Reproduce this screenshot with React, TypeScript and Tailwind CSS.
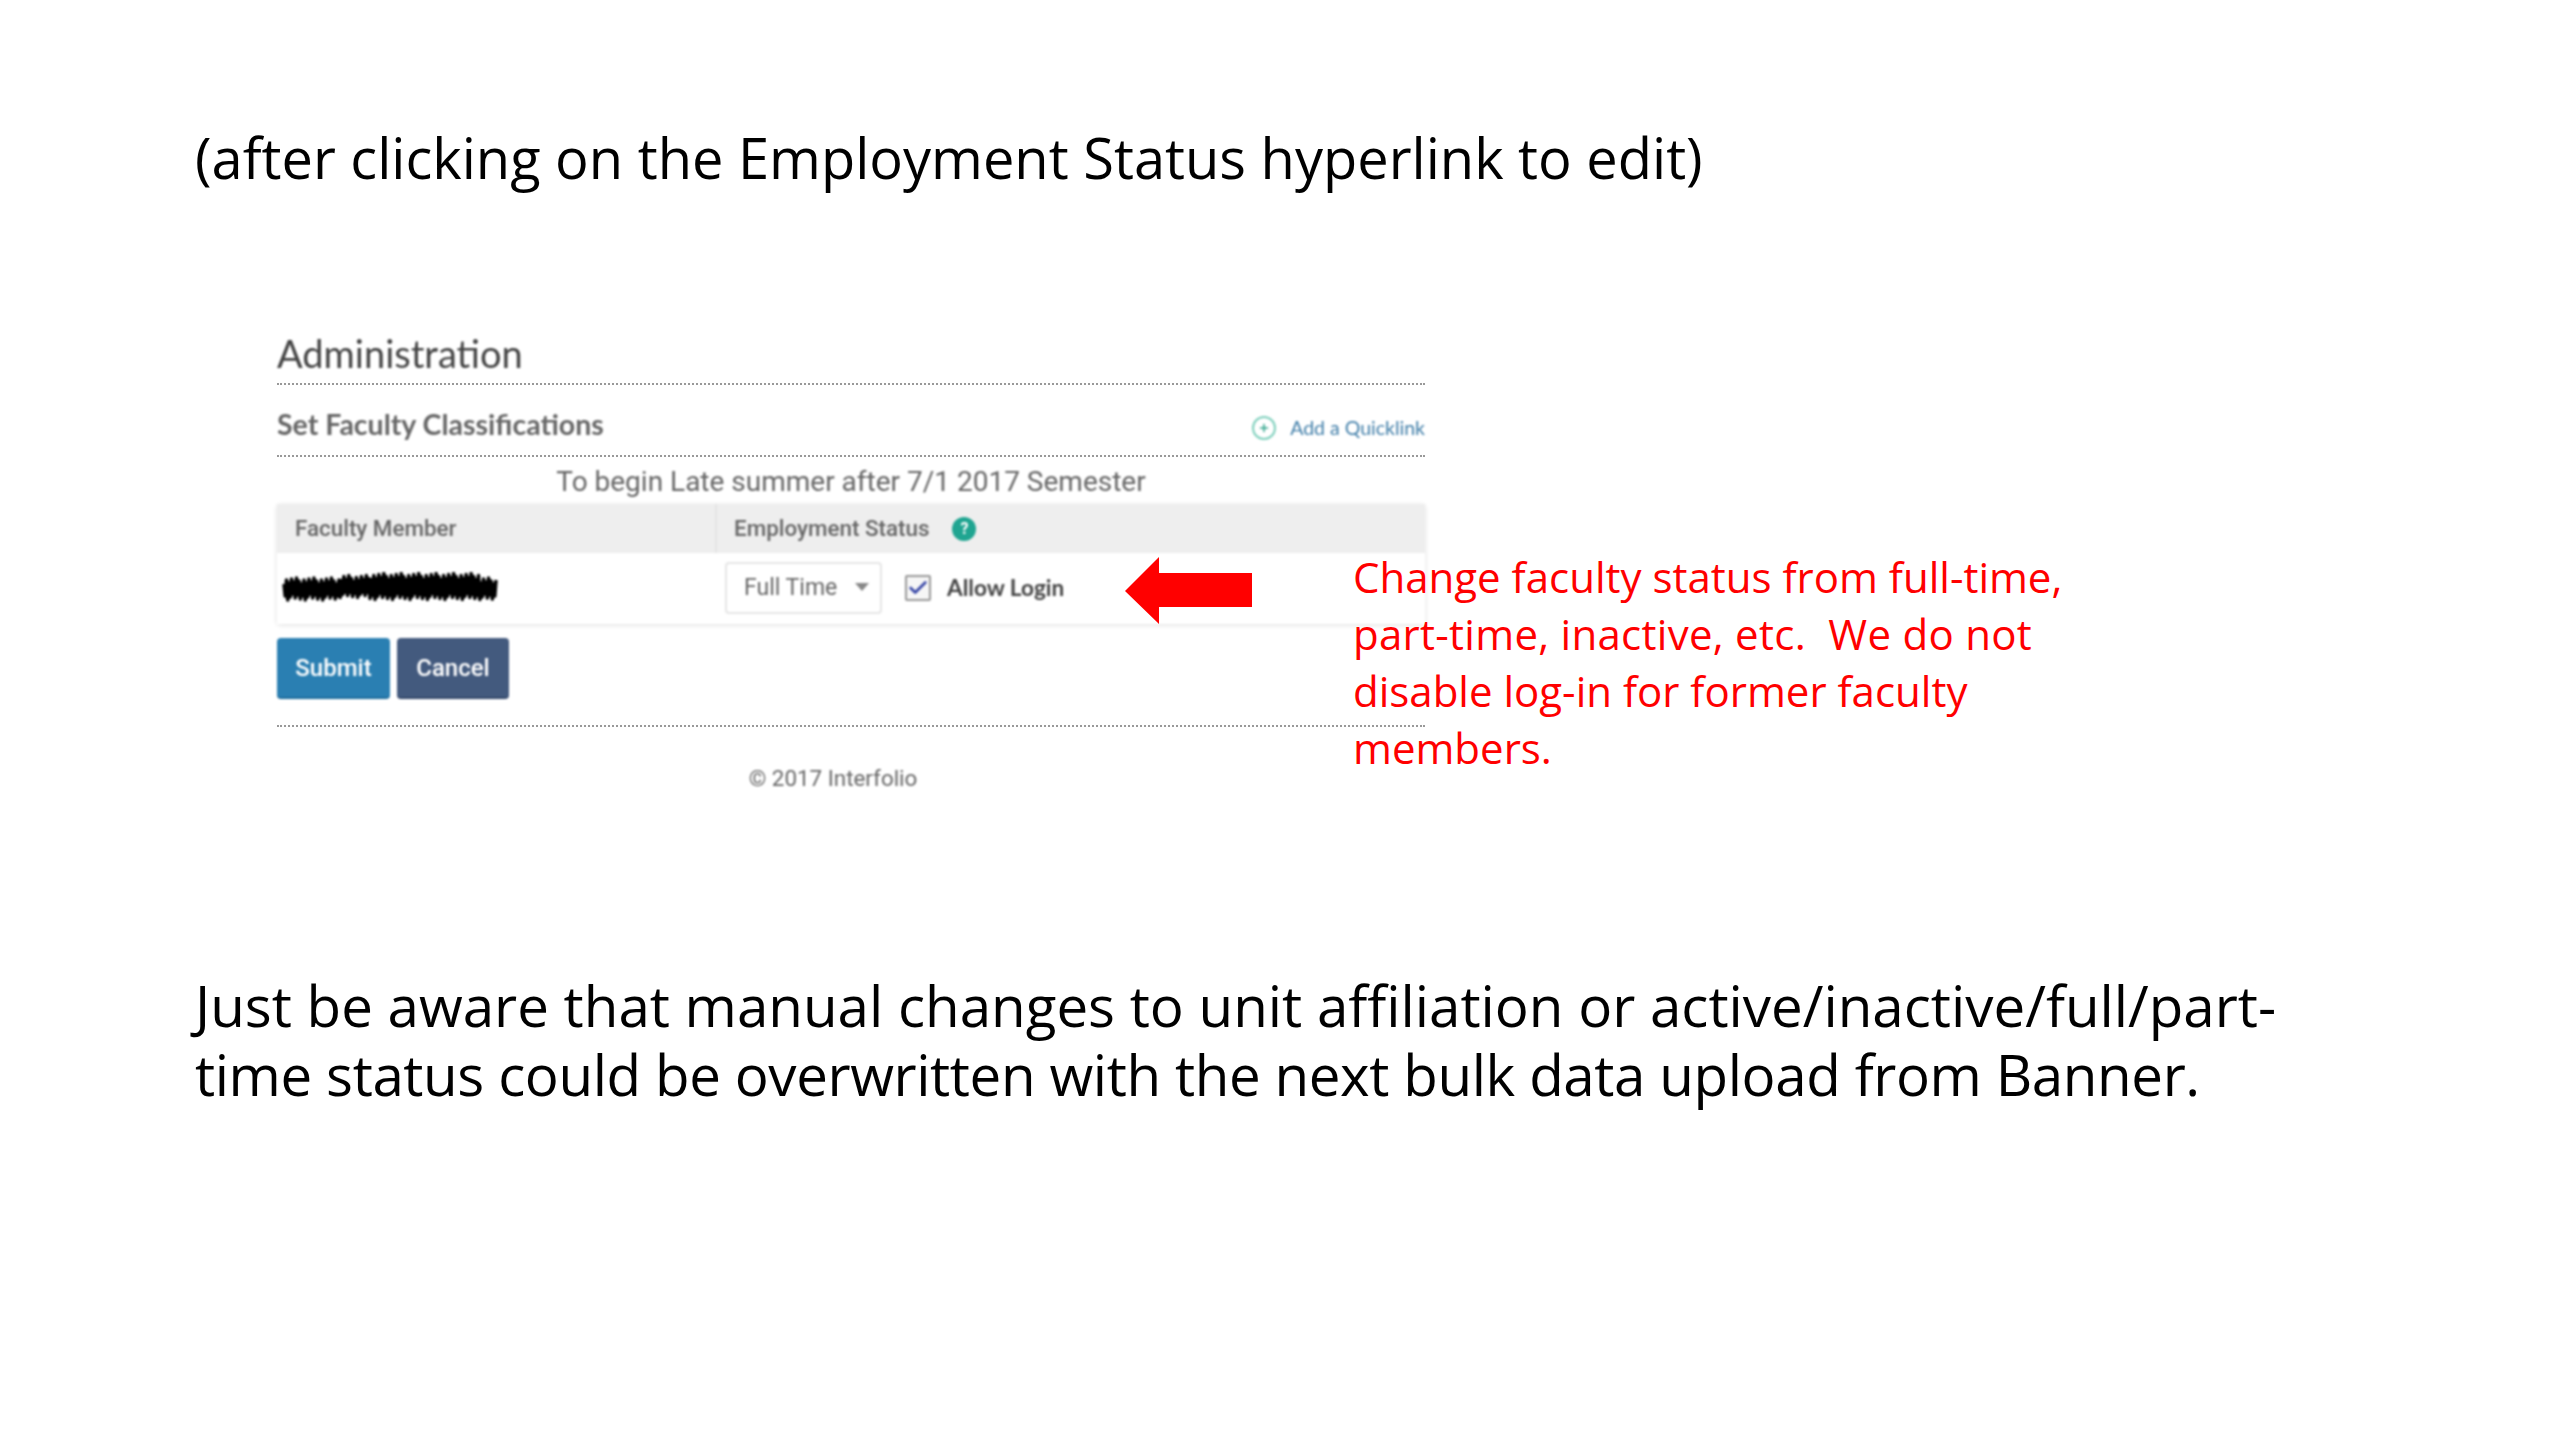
import { Check, Plus } from 'lucide-react'

const slideFont = "font-['Open_Sans',sans-serif]"
const roboto = "font-['Roboto',sans-serif]"
const lato = "font-['Lato',sans-serif]"

// redaction scribble over the faculty member's name
function scribblePoints() {
  const pts: string[] = []
  for (let i = 0; i <= 170; i++) {
    const x = 4 + (i / 170) * 212
    const reach = 5 + ((i * 37) % 7) + (x > 90 && x < 200 ? 2 : 0)
    const y = 16 + (i % 2 === 0 ? -1 : 1) * reach - (x > 60 && x < 200 ? 1.5 : -1)
    pts.push(`${x.toFixed(1)},${y.toFixed(1)}`)
  }
  return pts.join(' ')
}

function AdminScreenshot() {
  return (
    <section className="ml-[82px] mt-[141px] w-[1148px]">
      <div className="flex h-[52px] items-center border-b-2 border-dotted border-[#999] pb-[11px]">
        <h2 className={`${lato} text-[38px] leading-none text-[#444] blur-[0.8px]`}>Administration</h2>
      </div>
      <div className="flex h-[72px] items-center justify-between border-b-2 border-dotted border-[#999] pt-[8px]">
        <h3 className={`${lato} text-[28.5px] font-bold text-[#666] blur-[0.8px]`}>Set Faculty Classifications</h3>
        <a className={`${lato} mt-[8px] flex items-center gap-[14px] text-[19.5px] text-[#3f7da8] blur-[0.8px]`}>
          <span className="flex size-[24px] items-center justify-center rounded-full border-2 border-[#7fd0bd]">
            <Plus className="size-[12px] text-[#2fa58b]" strokeWidth={3} aria-hidden />
          </span>
          Add a Quicklink
        </a>
      </div>
      <p className={`${roboto} h-[47px] pt-[7px] text-center text-[28px] leading-[36px] text-[#666] blur-[0.8px]`}>
        To begin Late summer after 7/1 2017 Semester
      </p>
      <div className="rounded-[3px] shadow-[0_1px_5px_rgba(0,0,0,0.13)] blur-[0.8px]">
        <div className={`${roboto} grid h-[49px] grid-cols-[440px_1fr] bg-[#eeeeee] text-[22.4px] font-medium text-[#666]`}>
          <div className="flex items-center border-r-2 border-[#e4e4e4] pl-[18px]">Faculty Member</div>
          <div className="flex items-center pl-[17px]">
            Employment Status
            <span className="ml-[23px] flex size-[24px] items-center justify-center rounded-full bg-[#1fa591] text-[16px] font-bold text-white">
              ?
            </span>
          </div>
        </div>
        <div className="grid h-[71px] grid-cols-[440px_1fr] items-center bg-white pb-[1px]">
          <svg width="222" height="32" viewBox="0 0 222 32" className="ml-[3px]" aria-hidden>
            <polyline points={scribblePoints()} fill="none" stroke="#000" strokeWidth="3.5" strokeLinejoin="round" />
            <rect x="6" y="11" width="210" height="11" rx="5" fill="#000" />
          </svg>
          <div className="flex items-center pl-[8px]">
            <div className={`${roboto} flex h-[52px] w-[157px] items-center rounded-[4px] border-2 border-[#e6e6e6] pl-[17px] text-[23px] text-[#666]`}>
              Full Time
              <span className="ml-[18px] mb-[3px] h-0 w-0 border-x-[7px] border-t-[8px] border-x-transparent border-t-[#888]" />
            </div>
            <span className="ml-[23px] flex size-[26px] items-center justify-center rounded-[2px] border-2 border-[#999] bg-[#f6f6f6]">
              <Check className="size-[22px] text-[#3b4aa8]" strokeWidth={3} aria-hidden />
            </span>
            <span className={`${lato} ml-[16px] text-[22.6px] font-bold text-[#444]`}>Allow Login</span>
          </div>
        </div>
      </div>
      <div className="mt-[14px] border-b-2 border-dotted border-[#999] pb-[26px]">
        <div className={`${roboto} flex gap-[7px] text-[24px] font-medium text-white blur-[0.8px]`}>
          <button type="button" className="h-[61px] w-[113px] rounded-[4px] border-b-2 border-[#1d6c9c] bg-[#2a7fb2]">Submit</button>
          <button type="button" className="h-[61px] w-[112px] rounded-[4px] border-b-2 border-[#34496b] bg-[#435a7e]">Cancel</button>
        </div>
      </div>
      <p className={`${roboto} mt-[36px] pr-[36px] text-center text-[22.4px] leading-[30px] text-[#666] blur-[0.8px]`}>© 2017 Interfolio</p>
    </section>
  )
}

export default function App() {
  return (
    <main className={`${slideFont} relative h-[1440px] w-[2560px] overflow-hidden bg-white pl-[195px] pt-[122px] text-black`}>
      <h1 className="text-[56px] leading-[70px]">(after clicking on the Employment Status hyperlink to edit)</h1>
      <AdminScreenshot />

      <svg width="127" height="67" viewBox="0 0 127 67" className="absolute left-[1125px] top-[557px]" aria-hidden>
        <polygon points="0,34 34,0 34,16 127,16 127,50 34,50 34,67" fill="#ff0000" />
      </svg>
      <p className="absolute left-[1353px] top-[548px] text-[42px] leading-[57px] text-[#ff0000]">
        Change faculty status from full-time,
        <br />
        <span className="tracking-[0.28px]">part-time, inactive, etc.&nbsp; We do not</span>
        <br />
        disable log-in for former faculty
        <br />
        members.
      </p>

      <p className="mt-[178px] text-[56.5px] leading-[69px]">
        Just be aware that manual changes to unit affiliation or active/inactive/full/part-
        <br />
        <span className="tracking-[-0.4px]">time status could be overwritten with the next bulk data upload from Banner.</span>
      </p>
    </main>
  )
}
